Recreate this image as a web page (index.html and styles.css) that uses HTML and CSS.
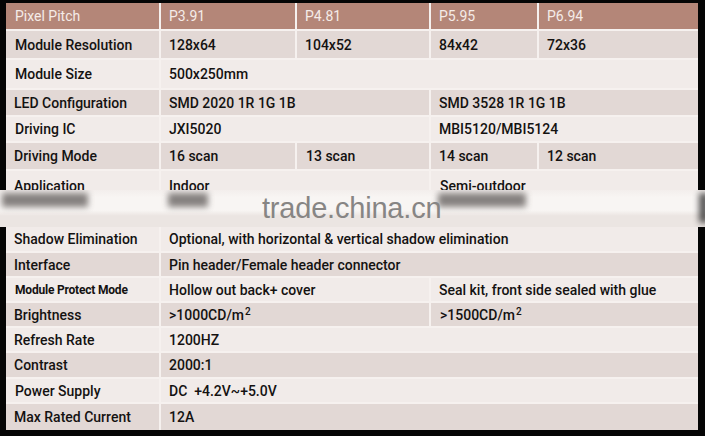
FILE: index.html
```html
<!DOCTYPE html>
<html>
<head>
<meta charset="utf-8">
<link rel="stylesheet" href="styles.css">
</head>
<body>
<div class="sheet">
  <div class="c hd">Pixel Pitch</div>
  <div class="c hd">P3.91</div>
  <div class="c hd">P4.81</div>
  <div class="c hd">P5.95</div>
  <div class="c hd">P6.94</div>

  <div class="c dk">Module Resolution</div>
  <div class="c dk">128x64</div>
  <div class="c dk">104x52</div>
  <div class="c dk">84x42</div>
  <div class="c dk">72x36</div>

  <div class="c lt">Module Size</div>
  <div class="c lt s4">500x250mm</div>

  <div class="c dk">LED Configuration</div>
  <div class="c dk s2">SMD 2020 1R 1G 1B</div>
  <div class="c dk s2">SMD 3528 1R 1G 1B</div>

  <div class="c lt">Driving IC</div>
  <div class="c lt s2">JXI5020</div>
  <div class="c lt s2">MBI5120/MBI5124</div>

  <div class="c dk">Driving Mode</div>
  <div class="c dk">16 scan</div>
  <div class="c dk">13 scan</div>
  <div class="c dk">14 scan</div>
  <div class="c dk">12 scan</div>

  <div class="c app">Application</div>
  <div class="c app s2">Indoor</div>
  <div class="c app s2">Semi-outdoor</div>

  <div class="c lt">Shadow Elimination</div>
  <div class="c lt s4">Optional, with horizontal &amp; vertical shadow elimination</div>

  <div class="c dk">Interface</div>
  <div class="c dk s4">Pin header/Female header connector</div>

  <div class="c lt small">Module Protect Mode</div>
  <div class="c lt s2">Hollow out back+ cover</div>
  <div class="c lt s2">Seal kit, front side sealed with glue</div>

  <div class="c dk">Brightness</div>
  <div class="c dk s2"><span>&gt;1000CD/m<sup>2</sup></span></div>
  <div class="c dk s2"><span>&gt;1500CD/m<sup>2</sup></span></div>

  <div class="c lt">Refresh Rate</div>
  <div class="c lt s4">1200HZ</div>

  <div class="c dk">Contrast</div>
  <div class="c dk s4">2000:1</div>

  <div class="c lt">Power Supply</div>
  <div class="c lt s4">DC&nbsp; +4.2V~+5.0V</div>

  <div class="c dk">Max Rated Current</div>
  <div class="c dk s4">12A</div>
</div>

<div class="band">
  <div class="blob b1"></div>
  <div class="blob b2"></div>
  <div class="blob b3"></div>
  <div class="blob b4"></div>
  <div class="mark">trade.china.cn</div>
</div>
</body>
</html>
```

FILE: styles.css
```css
html, body {
  margin: 0;
  padding: 0;
  background: #050505;
  width: 705px;
  height: 436px;
  overflow: hidden;
}

body {
  position: relative;
  font-family: Roboto, "Liberation Sans", sans-serif;
}

.sheet {
  margin: 3px 0 0 6px;
  width: 692px;
  display: grid;
  grid-template-columns: 153px 134px 132px 106px 159px;
  grid-template-rows: 26px 27px 28px 25px 24px 26px 54px 24px 23px 23px 23px 23px 24px 23px 26px;
  gap: 2px;
  background: #f6f1ef;
}

.c {
  display: flex;
  align-items: center;
  padding-left: 8px;
  font-size: 14px;
  font-weight: 500;
  letter-spacing: 0;
  color: #141211;
  white-space: nowrap;
}

.sheet > .c:nth-child(5n+1) {
  padding-left: 9px;
}

.hd {
  background: #b48678;
  color: #f5ece8;
  font-weight: 400;
}

.dk { background: #e2d8d5; }
.lt { background: #f1ebe9; }

.app {
  background: #f1ebe9;
  align-items: flex-start;
  padding-top: 7px;
}

.s2 { grid-column: span 2; }
.s4 { grid-column: span 4; }

.sheet > .small { font-size: 12px; font-weight: 700; letter-spacing: -0.2px; }

sup {
  font-size: 10px;
  line-height: 1;
  position: relative;
  top: -5px;
  vertical-align: baseline;
  margin-left: 1px;
}

.band {
  position: absolute;
  left: 0;
  top: 190px;
  width: 705px;
  height: 37px;
  background: linear-gradient(#f3eeec 0, #f8f5f3 20%, #f8f5f3 55%, #ebe5e2 70%, #ebe5e2 100%);
  overflow: hidden;
}

.blob {
  position: absolute;
  top: 3px;
  height: 14px;
  background: #5f5a58;
  filter: blur(3px);
  opacity: 0.75;
}
.b1 { left: 2px; width: 86px; }
.b2 { left: 168px; width: 40px; }
.b3 { left: 438px; width: 88px; }
.b4 { left: 699px; width: 10px; height: 30px; background: #222; }

.mark {
  position: absolute;
  left: 262px;
  top: 2px;
  font-family: "Liberation Sans", Arial, sans-serif;
  font-size: 29px;
  color: #878584;
  letter-spacing: -0.2px;
}
```
